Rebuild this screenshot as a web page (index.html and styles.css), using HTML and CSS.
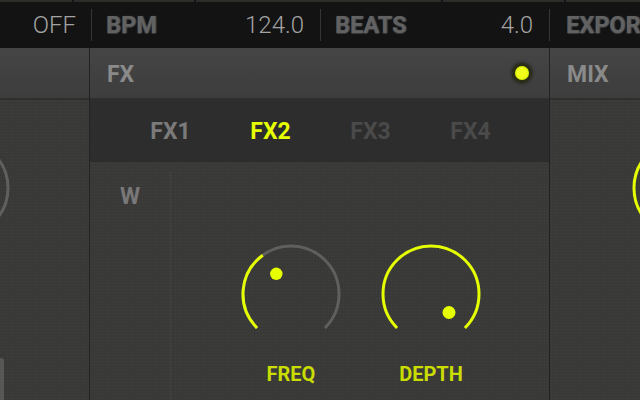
FILE: index.html
```html
<!DOCTYPE html>
<html>
<head>
<meta charset="utf-8">
<link rel="stylesheet" href="styles.css">
</head>
<body>
<div class="app">
  <div class="topline"></div>
  <div class="topbar">
    <div class="cell first"><span class="value">OFF</span></div>
    <div class="sep"></div>
    <div class="cell"><span class="label">BPM</span><span class="value">124.0</span></div>
    <div class="sep"></div>
    <div class="cell"><span class="label">BEATS</span><span class="value">4.0</span></div>
    <div class="sep"></div>
    <div class="cell last"><span class="label">EXPORT</span></div>
  </div>
  <div class="panels">
    <section class="panel left">
      <div class="phead"></div>
      <div class="pbody">
        <svg class="knob edge-left" width="104" height="104" viewBox="0 0 104 104">
          <path d="M18.06 85.94 A48 48 0 1 1 85.94 85.94" fill="none" stroke="#606060" stroke-width="3"/>
        </svg>
        <div class="scroll"></div>
      </div>
    </section>
    <section class="panel mid">
      <div class="phead"><span class="ptitle">FX</span><span class="led"></span></div>
      <div class="tabs">
        <span class="tab on-dim">FX1</span>
        <span class="tab active">FX2</span>
        <span class="tab off">FX3</span>
        <span class="tab off">FX4</span>
      </div>
      <div class="pbody fxbody">
        <div class="wcol"><span class="w">W</span></div>
        <div class="knobs">
          <div class="kcol">
            <svg class="knob" width="104" height="104" viewBox="0 0 104 104">
              <path d="M18.06 85.94 A48 48 0 1 1 85.94 85.94" fill="none" stroke="#5f5f5f" stroke-width="3"/>
              <path d="M18.06 85.94 A48 48 0 0 1 23.79 13.17" fill="none" stroke="#e6ff00" stroke-width="3"/>
              <circle cx="37.3" cy="31.8" r="6.2" fill="#e6ff00"/>
            </svg>
            <span class="klabel">FREQ</span>
          </div>
          <div class="kcol">
            <svg class="knob" width="104" height="104" viewBox="0 0 104 104">
              <path d="M18.06 85.94 A48 48 0 1 1 85.94 85.94" fill="none" stroke="#e6ff00" stroke-width="3"/>
              <circle cx="70" cy="70.5" r="6.5" fill="#e6ff00"/>
            </svg>
            <span class="klabel">DEPTH</span>
          </div>
        </div>
      </div>
    </section>
    <section class="panel right">
      <div class="phead"><span class="ptitle">MIX</span></div>
      <div class="pbody">
        <svg class="knob edge-right" width="104" height="104" viewBox="0 0 104 104">
          <path d="M18.06 85.94 A48 48 0 1 1 85.94 85.94" fill="none" stroke="#e6ff00" stroke-width="3"/>
        </svg>
      </div>
    </section>
  </div>
</div>
</body>
</html>
```
FILE: styles.css
```css
* { box-sizing: border-box; }
html, body { margin: 0; padding: 0; }
body {
  width: 640px;
  height: 400px;
  overflow: hidden;
  background: #393938;
  font-family: Roboto, "Liberation Sans", sans-serif;
}
.app { width: 640px; height: 400px; display: flex; flex-direction: column; }

.topline {
  height: 2px;
  flex: none;
  background: linear-gradient(to right,
    #2d2d29 0 72px, #141414 72px 74px, #2d2d29 74px 194px, #141414 194px 196px,
    #2d2d29 196px 441px, #141414 441px 443px, #2d2d29 443px 564px, #141414 564px 566px,
    #2d2d29 566px);
}
.topbar {
  height: 46px;
  flex: none;
  background: #131313;
  display: flex;
  align-items: center;
  overflow: hidden;
}
.cell {
  width: 228px;
  flex: none;
  display: flex;
  align-items: center;
  justify-content: space-between;
  padding: 0 16px 0 14px;
  height: 100%;
}
.cell.first { width: 91px; justify-content: flex-end; padding-right: 15px; }
.cell.last { width: 100px; padding-left: 16px; }
.sep { width: 1px; height: 32px; background: #343434; flex: none; }
.value {
  font-weight: 300;
  font-size: 24px;
  color: #a3a3a3;
  white-space: nowrap;
}
.label {
  font-weight: 700;
  font-size: 23.5px;
  color: #626262;
  text-shadow: 1px 0 1px #4a4a4a, 0 1px 1px #3a3a3a;
  white-space: nowrap;
}

.panels { flex: 1; display: flex; min-height: 0; }
.panel { display: flex; flex-direction: column; overflow: hidden; position: relative; }
.panel.left { width: 90px; border-right: 1px solid #222; flex: none; }
.panel.mid { width: 460px; border-right: 1px solid #222; flex: none; }
.panel.right { flex: 1; }

.phead {
  height: 52px;
  flex: none;
  background: linear-gradient(#454545, #3d3d3d);
  border-bottom: 2px solid #2f2f2f;
  display: flex;
  align-items: center;
  justify-content: space-between;
  padding: 2px 20px 0 17px;
}
.ptitle { font-weight: 700; font-size: 23px; color: #8a8a8a; }
.led {
  width: 14px;
  height: 14px;
  margin-top: -2px;
  border-radius: 50%;
  background: radial-gradient(circle, #f2ff1a 0 45%, #d4ee00 75%, #a8b800 100%);
  box-shadow: 0 0 0 3px #2b2d17, 0 0 3px 4px rgba(20, 20, 10, 0.45);
}

.tabs {
  height: 62px;
  flex: none;
  background: #2d2d2d;
  display: flex;
  justify-content: center;
  align-items: center;
  padding-left: 2px;
}
.tab {
  width: 100px;
  text-align: center;
  font-weight: 700;
  font-size: 23px;
}
.tab.on-dim { color: #7a7a7a; }
.tab.active { color: #e6ff00; }
.tab.off { color: #4a4a4a; }

.pbody {
  flex: 1;
  background-color: #393938;
  background-image: radial-gradient(circle, #40403f 0.7px, transparent 1px);
  background-size: 3px 3px;
  position: relative;
}
.fxbody { display: flex; align-items: stretch; }
.wcol {
  width: 80px;
  flex: none;
  display: flex;
  justify-content: center;
  align-items: flex-start;
  padding-top: 22px;
}
.w { font-weight: 700; font-size: 23px; line-height: 26px; color: #787878; }
.knobs {
  flex: 1;
  margin-top: 10px;
  border-left: 1px dotted #474746;
  display: flex;
  align-items: flex-start;
  gap: 36px;
  padding: 70px 0 0 68px;
}
.kcol { display: flex; flex-direction: column; align-items: center; width: 104px; }
.knob { display: block; flex: none; }
.klabel {
  margin-top: 16px;
  font-weight: 700;
  font-size: 20px;
  line-height: 24px;
  color: #cadd00;
}
.edge-left { margin: 36px 0 0 -92px; }
.edge-right { margin: 36px 0 0 80px; }
.scroll {
  position: absolute;
  left: 0;
  bottom: 0;
  width: 4px;
  height: 42px;
  background: #575757;
  border-radius: 0 3px 0 0;
}
```
